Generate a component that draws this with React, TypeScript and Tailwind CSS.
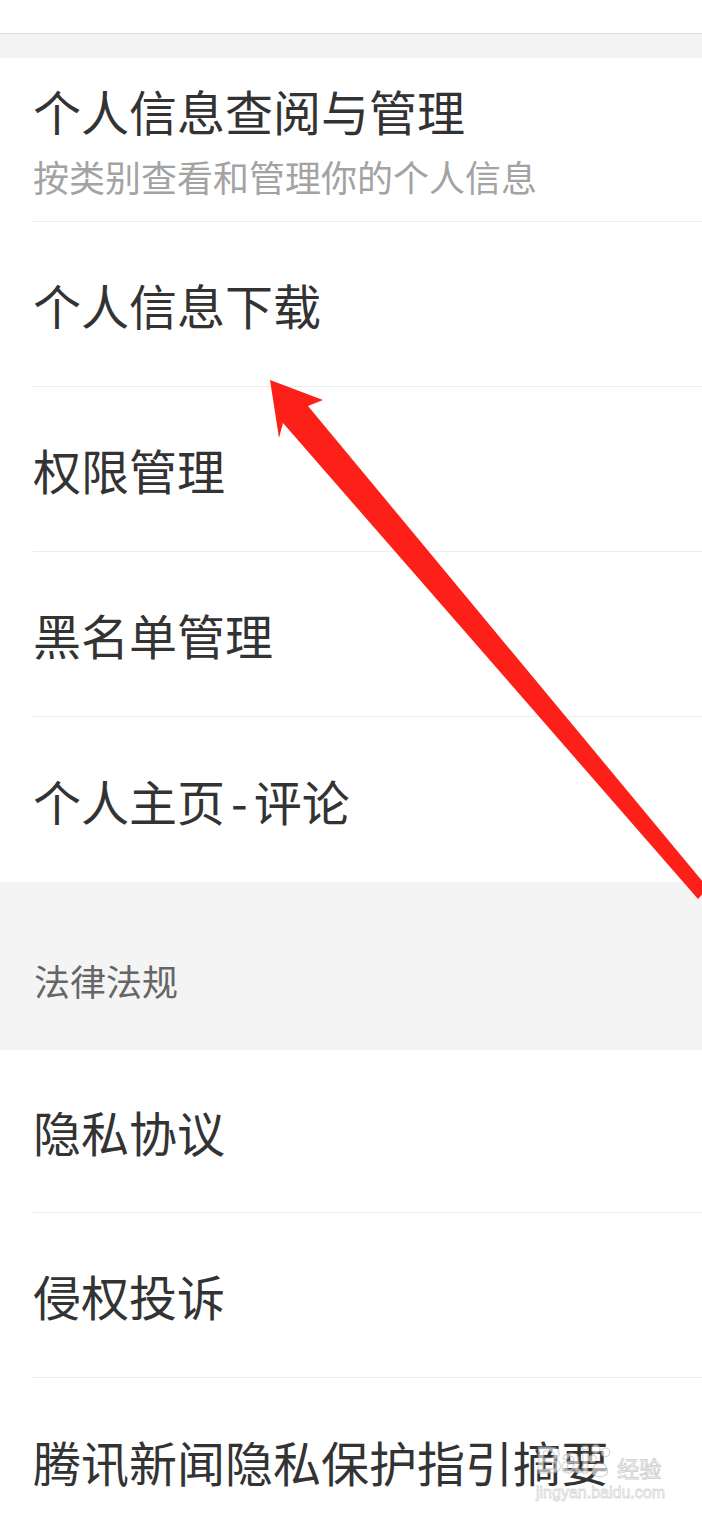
const font = { fontFamily: '"Noto Sans CJK SC", "Noto Sans", sans-serif' };

const Row = ({ label, last }: { label: React.ReactNode; last?: boolean }) => (
  <div className={`ml-[33px] flex h-[165px] items-center ${last ? "" : "border-b border-[#ededed]"}`}>
    <span className="text-[48px] leading-[60px] text-[#333333]">{label}</span>
  </div>
);

export default function App() {
  return (
    <div className="relative h-[1519px] w-[702px] overflow-hidden bg-white" style={font}>
      {/* top bar */}
      <div className="h-[34px] border-b border-[#dcdcdc] bg-white" />
      <div className="h-[24px] bg-[#f4f4f4]" />

      {/* personal info section */}
      <div className="bg-white">
        <div className="ml-[33px] h-[164px] border-b border-[#ededed] pt-[22px]">
          <p className="text-[48px] leading-[60px] text-[#333333]">个人信息查阅与管理</p>
          <p className="mt-[12px] text-[36px] leading-[48px] text-[#a3a3a3]">按类别查看和管理你的个人信息</p>
        </div>
        <Row label="个人信息下载" />
        <Row label="权限管理" />
        <Row label="黑名单管理" />
        <Row
          label={
            <>
              个人主页<span className="mx-[6px]">-</span>评论
            </>
          }
          last
        />
      </div>

      {/* section header */}
      <div className="flex h-[168px] items-center bg-[#f4f4f4] pl-[34px] pt-[28px]">
        <span className="text-[36px] leading-[48px] text-[#666666]">法律法规</span>
      </div>

      <div className="bg-white">
        <div className="ml-[33px] flex h-[163px] items-center border-b border-[#ededed]">
          <span className="text-[48px] leading-[60px] text-[#333333]">隐私协议</span>
        </div>
        <Row label="侵权投诉" />
        <Row label="腾讯新闻隐私保护指引摘要" last />
      </div>

      {/* red arrow annotation */}
      <svg className="absolute left-0 top-0" width="702" height="1519" viewBox="0 0 702 1519">
        <polygon
          points="270,380 323,400 308,406 708,888 698,899 283,423 279,438"
          fill="#fc2019"
        />
      </svg>

      {/* watermark */}
      <div className="absolute left-[536px] top-[1440px] flex flex-col opacity-60">
        <div className="flex items-center">
          <span
            className="text-[36px] font-bold leading-[42px] tracking-tight text-white"
            style={{ fontFamily: '"Liberation Sans", sans-serif', WebkitTextStroke: "1px #b5b5b5" }}
          >
            Bai
          </span>
          <svg width="26" height="38" viewBox="0 0 24 34" className="-ml-[2px]">
            <g fill="white" stroke="#b5b5b5" strokeWidth="1">
              <circle cx="8" cy="6" r="4" />
              <circle cx="17" cy="9" r="4" />
              <circle cx="5" cy="15" r="3.5" />
              <path d="M6 30 C2 26 8 18 12 19 C17 19 22 27 17 30 C14 32 10 32 6 30 Z" />
            </g>
          </svg>
          <span
            className="ml-[4px] mt-[12px] text-[22px] leading-[26px] text-white"
            style={{ WebkitTextStroke: "1px #b5b5b5" }}
          >
            经验
          </span>
        </div>
        <span
          className="mt-[2px] text-[16px] leading-[18px] text-white"
          style={{ fontFamily: '"Liberation Sans", sans-serif', WebkitTextStroke: "0.8px #c0c0c0" }}
        >
          jingyan.baidu.com
        </span>
      </div>
    </div>
  );
}
